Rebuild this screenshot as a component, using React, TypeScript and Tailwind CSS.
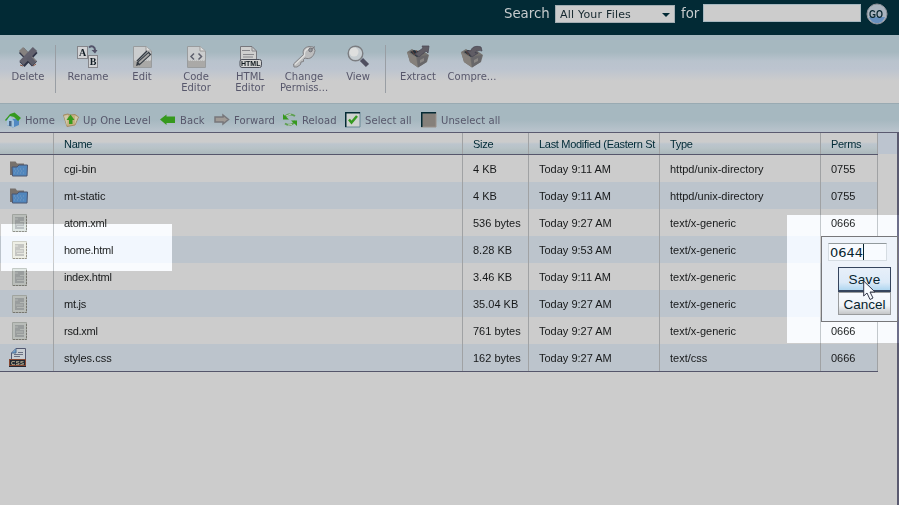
import React from 'react';

const Delete = () => (
  <svg width="24" height="24" viewBox="0 0 24 24">
    <path d="M5.500 5.500L18.500 19M19 5.500L6 19.500" stroke="#2f3346" strokeWidth="7" strokeLinecap="butt" />
    <path d="M5 4L18.500 18" stroke="#85817f" strokeWidth="6" strokeLinecap="butt" />
    <path d="M19 4L5.500 18" stroke="#62616e" strokeWidth="6" strokeLinecap="butt" />
    <path d="M12 12L18 18.500" stroke="#5d5d6a" strokeWidth="5" />
    <path d="M4 20L7 21M17 21L20 19" stroke="#8a5340" strokeWidth="1" />
  </svg>
);
const Rename = () => (
  <svg width="24" height="24" viewBox="0 0 24 24">
    <rect x="1.500" y="1.500" width="10" height="12" fill="#d2d3d5" stroke="#85868b" />
    <rect x="12.500" y="10.500" width="9" height="12" fill="#d2d3d5" stroke="#85868b" />
    <text x="6.500" y="11" textAnchor="middle" fontSize="10" fontWeight="bold" fontFamily="Liberation Serif, serif" fill="#111c24">A</text>
    <text x="17" y="20" textAnchor="middle" fontSize="10" fontWeight="bold" fontFamily="Liberation Serif, serif" fill="#111c24">B</text>
    <path d="M13 2.500C16 0 19 2 19 5" stroke="#535369" strokeWidth="2" fill="none" />
    <path d="M15.500 5H21.500L19 8.500Z" fill="#535369" />
  </svg>
);
const Paper = ({ children }: { children: React.ReactNode }) => (
  <svg width="24" height="24" viewBox="0 0 24 24">
    <path d="M3.500 1.500H16L21.500 6V22.500H3.500Z" fill="#cbcdce" stroke="#999c9e" />
    <path d="M4 16H21V22H4Z" fill="#aaa9a7" />
    <path d="M4 15.500H21" stroke="#bbbbb9" strokeDasharray="1 1" />
    <path d="M16 1.500V6H21" fill="#dedede" stroke="#9a9998" />
    {children}
  </svg>
);
const Edit = () => (
  <Paper>
    <path d="M8 19L20 8" stroke="#343b43" strokeWidth="4" />
    <path d="M9 18L19 9" stroke="#aaa9a8" strokeWidth="1.800" />
    <path d="M6 21L9 20L7 17Z" fill="#30363d" />
    <path d="M7 16L17 6" stroke="#343b43" strokeWidth="1.500" />
  </Paper>
);
const Code = () => (
  <Paper>
    <path d="M10 8.500L7 11.500L10 14.500M14.500 8.500L17.500 11.500L14.500 14.500" fill="none" stroke="#5f606d" strokeWidth="1.500" />
  </Paper>
);
const Html = () => (
  <svg width="24" height="24" viewBox="0 0 24 24">
    <path d="M2.500 1.500H14L18.500 6V18H2.500Z" fill="#d0d0cf" stroke="#77777c" />
    <path d="M14 2V6H18M4 5.500H12M5 9.500H16M5 12H15" fill="none" stroke="#88888c" />
    <rect x="2" y="14.500" width="21.500" height="8" rx="2" fill="#d2d2d1" stroke="#4b4e58" />
    <text x="12.750" y="21" textAnchor="middle" fontSize="7" fontWeight="bold" fontFamily="Liberation Sans, sans-serif" fill="#10191e">HTML</text>
  </svg>
);
const Key = () => (
  <svg width="24" height="24" viewBox="0 0 24 24">
    <path d="M1.500 19L11.500 9.500C10 5 13 2 17 1.500L21.500 2L23 5.500C22 11 19 14 15 13.500L13 13L11.500 14.500V16.500L9 17L8.500 19.500L5 22H2Z" fill="#bcbdbe" stroke="#818185" />
    <path d="M3 19.500L12.500 10.500C12 6 14 4 17 3.500" fill="none" stroke="#dfdfde" strokeWidth="1.300" />
    <circle cx="18.500" cy="5" r="1.800" fill="#92979b" stroke="#717177" />
    <path d="M20 4L23 1.500" stroke="#77777d" />
  </svg>
);
const View = () => (
  <svg width="24" height="24" viewBox="0 0 24 24">
    <path d="M15.500 14.500L21.500 20.500" stroke="#4f4f60" strokeWidth="4.500" />
    <circle cx="9.500" cy="8.500" r="7.300" fill="#c6cdd1" stroke="#7b7d81" strokeWidth="1.400" />
    <circle cx="8" cy="7" r="4.500" fill="#dedfde" />
  </svg>
);
const Box = ({ arrow }: { arrow: string }) => (
  <svg width="24" height="24" viewBox="0 0 24 24">
    <path d="M1 7L6 4L9 6L16 5L23 10L21 17L12 22.500L4 17Z" fill="#74726f" />
    <path d="M1 7L10 12L12 22.500L4 17Z" fill="#85807b" />
    <path d="M11 12L22 10L20.500 17L12 22.500Z" fill="#68676a" />
    <path d="M4 7L8 5L18 8L11 12Z" fill="#26303a" />
    <path d="M6 6L9 10M10 5L12 10M13 6L14 9" stroke="#85503f" strokeWidth=".7" />
    <path d={arrow} fill="#605d65" stroke="#4b4a57" strokeWidth=".8" />
    <path d="M14 15L18 13V16L14 18Z" fill="#8a8785" />
  </svg>
);

const tools = [
  ['Rename', <Rename />], ['Edit', <Edit />], ['Code Editor', <Code />], ['HTML Editor', <Html />],
  ['Change Permiss...', <Key />], ['View', <View />],
] as const;

function Tool({ label, icon }: { label: string; icon: React.ReactNode }) {
  return (
    <div className="flex w-[54px] shrink-0 flex-col items-center pt-[10px] text-center text-[10px] leading-[11px] text-[#57576b]">
      {icon}
      <span className="pt-[2px]">{label.split(' ').map((w) => <span key={w} className="block">{w}</span>)}</span>
    </div>
  );
}

const Home = () => (
  <svg width="16" height="16" viewBox="0 0 16 16">
    <path d="M2 7V13L8 15.500L14 13V7Z" fill="#5189c3" /><path d="M2 8L5 4L9 9V15.500L2 13Z" fill="#a3c3dc" />
    <rect x="4" y="9" width="2.500" height="5" fill="#496786" />
    <path d="M0 8L5 2L9.500 .5L16 6L13 9L9 5L5 4L1 9Z" fill="#369a20" />
  </svg>
);
const Up = () => (
  <svg width="16" height="16" viewBox="0 0 16 16">
    <path d="M.5 3L5 2L7 3L12 2.500L15.500 5L12 13L4 14.500Z" fill="#c6b07f" stroke="#a28c68" />
    <path d="M1 4L5 3L4 14ZM12 4L15 5L12 12Z" fill="#d0c8aa" />
    <path d="M7.500 2.500L11.500 8H9.500V12H6V8H3.500Z" fill="#36991d" />
  </svg>
);
const Arrow = ({ back = false }) => (
  <svg width="16" height="16" viewBox="0 0 16 16">
    {back ? <path d="M0 7.500L6.500 2.500V4.500H15V11H6.500V13Z" fill="#36991d" /> : <path d="M1 5H9V3L14.500 7.500L9 12V10H1Z" fill="#a09b96" stroke="#77777b" strokeWidth="1.500" />}
  </svg>
);
const Reload = () => (
  <svg width="16" height="16" viewBox="0 0 16 16">
    <path d="M3 6C4 2 9 1.500 13 4M13 9C11 13 7 14 3 11.500" fill="none" stroke="#5d9f51" strokeWidth="2" />
    <path d="M1 2V7.500H7ZM9 8.500H15V14Z" fill="#36991d" />
    <path d="M4 4L9 2M10 12.500L6 13" stroke="#c2cdbf" />
  </svg>
);
const Checked = ({ on = false }) => (
  <svg width="16" height="16" viewBox="0 0 16 16">
    <rect width="15" height="15" fill={on ? '#cfd2d0' : '#85807a'} />
    <path d="M0 15H15V0" fill="none" stroke={on ? '#698896' : '#9a918a'} />
    <path d="M.75 15V.75H15" fill="none" stroke="#042a34" strokeWidth="1.500" />
    {on && <path d="M4 7.500L6.500 10.500L12 4" fill="none" stroke="#369a20" strokeWidth="2.500" />}
  </svg>
);

const nav = [
  ['Home', <Home />, 'w-[58px]'], ['Up One Level', <Up />, 'w-[97px]'], ['Back', <Arrow back />, 'w-[54px]'],
  ['Forward', <Arrow />, 'w-[68px]'], ['Reload', <Reload />, 'w-[63px]'],
  ['Select all', <Checked on />, 'w-[76px]'], ['Unselect all', <Checked />, 'w-[90px]'],
] as const;

const Folder = () => (
  <svg width="18" height="16" viewBox="0 0 18 16">
    <path d="M0 .5H5.500L7 2.500H14V8L2 14H0Z" fill="#77716c" />
    <path d="M2 6H7L9 4H17.500L17 15H2.500Z" fill="#5287bd" stroke="#4b5671" />
    <path d="M4 8H15M5 10H14M4 12H15" stroke="#769bc0" strokeDasharray="1 2" />
  </svg>
);
const FileIcon = () => (
  <svg className="ml-[2px]" width="16" height="18" viewBox="0 0 16 18">
    <path d="M.5.500H14.500V17.500H.5Z" fill="#b9bdb9" stroke="#a0a49f" />
    <path d="M1 17.500H14.500V1" fill="none" stroke="#77766f" strokeDasharray="2 1" />
    <path d="M3 3H12V15H3Z" fill="#999d9d" />
    <path d="M3 5H6M8 7.500H12M4 10H11M5 12.500H12" stroke="#b9bcb9" strokeWidth=".8" />
  </svg>
);
const Css = () => (
  <svg className="-ml-px" width="18" height="19" viewBox="0 0 18 19">
    <path d="M2.500 5L7 .5H16.500V12H2.500Z" fill="#c8ced3" stroke="#535870" />
    <path d="M2.500 5H7V.5" fill="#719fca" stroke="#4c6a8e" /><path d="M9 4.500H14M5 6.500H14M5 8.500H11" stroke="#6a7081" />
    <rect y="11" width="17" height="8" fill="#202630" /><path d="M0 11.500H17M0 17.500H17M.5 11V18M16.500 11V18" stroke="#874832" />
    <text x="8.500" y="17" textAnchor="middle" fontSize="6" fontWeight="bold" textLength="13" fontFamily="Liberation Sans, sans-serif" fill="#c7bd9d">CSS</text>
  </svg>
);

const rows = [
  ['cgi-bin', '4 KB', 'Today 9:11 AM', 'httpd/unix-directory', '0755'],
  ['mt-static', '4 KB', 'Today 9:11 AM', 'httpd/unix-directory', '0755'],
  ['atom.xml', '536 bytes', 'Today 9:27 AM', 'text/x-generic', '0666'],
  ['home.html', '8.28 KB', 'Today 9:53 AM', 'text/x-generic', ''],
  ['index.html', '3.46 KB', 'Today 9:11 AM', 'text/x-generic', ''],
  ['mt.js', '35.04 KB', 'Today 9:27 AM', 'text/x-generic', ''],
  ['rsd.xml', '761 bytes', 'Today 9:27 AM', 'text/x-generic', '0666'],
  ['styles.css', '162 bytes', 'Today 9:27 AM', 'text/css', '0666'],
];
const columns = 'grid grid-cols-[54px_409px_66px_131px_161px_57px]';
const cell = 'flex items-center overflow-hidden whitespace-nowrap border-r border-[#a0a2a4] pl-[10px]';

export default function App() {
  return (
    <div className="relative isolate flex h-[505px] w-[899px] flex-col overflow-hidden bg-[#cccccc] font-['DejaVu_Sans',sans-serif]">
      <header className="flex h-[35px] shrink-0 bg-[#022a35] pl-[504px] text-[13.300px] text-[#c6cbcd]">
        <span className="w-[51px] pt-[4px]">Search</span>
        <div className="mt-[5px] flex h-[18px] w-[120px] items-center justify-between border border-[#a3adb2] bg-[#cccccc] pl-1 pr-1 text-[11px] text-[#15272e]">
          <span className="pt-[2px] tracking-[0.200px]">All Your Files</span>
          <svg className="mt-[3px]" width="8" height="5" viewBox="0 0 8 5"><path d="M0 0H8L4 4Z" fill="#022a35" /></svg>
        </div>
        <span className="w-[28px] pl-[6px] pt-[4px]">for</span>
        <div className="mt-1 h-[18px] w-[158px] border border-[#a6b8c0] bg-[#cccccc]" />
        <svg className="ml-[5px] mt-[3px]" width="22" height="22" viewBox="0 0 22 22">
          <circle cx="11" cy="11" r="10" fill="#a9b4bf" stroke="#8c9199" />
          <path d="M3 14H19C17 19 14 20 11 20S5 19 3 14Z" fill="#668fbd" />
          <text x="10" y="15" textAnchor="middle" fontSize="11" fontWeight="bold" textLength="14" lengthAdjust="spacingAndGlyphs" fontFamily="Liberation Sans, sans-serif" fill="#07252f">GO</text>
        </svg>
      </header>

      <div className="flex h-[69px] shrink-0 border-b border-[#99aab2] bg-[linear-gradient(#a6b8c0_0px,#a6b8c0_17px,#b9c3cd_26px,#bcc4cf_34px,#cccccc_46px)] pl-px">
        <Tool label="Delete" icon={<Delete />} />
        <div className="mr-[5px] mt-[10px] h-12 w-px bg-[#999ea4]" />
        {tools.map(([label, icon]) => <Tool key={label} label={label} icon={icon} />)}
        <div className="mr-[5px] mt-[10px] h-12 w-px bg-[#999ea4]" />
        <Tool label="Extract" icon={<Box arrow="M9 9L17 3L16 1L23 1L22 8L20 6L13 12Z" />} />
        <Tool label="Compre..." icon={<Box arrow="M21 2C15 0 11 3 11 6H7L12 12L18 8H15C15 6 18 5 22 6Z" />} />
      </div>

      <nav className="flex h-[28px] shrink-0 items-center bg-[linear-gradient(#a6b8c0_0px,#a6b8c0_16px,#bac4cd_28px)] pl-[5px] pt-[4px] text-[10px] tracking-[0.100px] text-[#57576b]">
        {nav.map(([label, icon, width]) => (
          <div key={label} className={`flex shrink-0 items-center gap-1 whitespace-nowrap ${width}`}>{icon}<span className="pt-px">{label}</span></div>
        ))}
      </nav>

      <main className="flex min-h-0 flex-1 border-r-2 border-t border-[#5a5a70] font-['Liberation_Sans',Arial,sans-serif] text-[11px] text-[#17191a]">
        <div className="flex w-[878px] shrink-0 flex-col">
          <div className={`${columns} h-[22px] shrink-0 border-b border-[#55566b] bg-[linear-gradient(#cccccc_0px,#cccccc_9px,#bcc5cd_11px,#b8c3c7_15px,#abb8bc_21px)] tracking-[-0.300px] text-[#002a35]`}>
            {['', 'Name', 'Size', 'Last Modified (Eastern St', 'Type', 'Perms'].map((name, i) => <div key={i} className={`${cell} pt-[2px]`}>{name}</div>)}
          </div>
          {rows.map((row, i) => (
            <div key={row[0]} className={`${columns} h-[27px] shrink-0 ${i % 2 ? 'bg-[#bcc4cc]' : 'bg-[#cccccc]'}`}>
              <div className={cell}>{i < 2 ? <Folder /> : i === 7 ? <Css /> : <FileIcon />}</div>
              {row.map((value, n) => <div key={n} className={`${cell} pt-px ${n === 0 && i > 1 && i < 7 ? 'tracking-[-0.250px]' : ''}`}>{value}</div>)}
            </div>
          ))}
          <div className="h-px bg-[#55566b]" />
        </div>
        <div className="h-[21px] flex-1 bg-[#bcc4cf]" />
      </main>

      {/* Spotlights on the edited file and its permissions */}
      <div className="absolute left-px top-[224px] h-[47px] w-[171px] bg-[linear-gradient(#2e3032_12px,#393532_12px,#393532_39px,#2e3032_39px)] mix-blend-color-dodge" />
      <div className="absolute left-[787px] top-[215px] h-[128px] w-[112px] bg-[linear-gradient(#2e3032_21px,#393532_21px,#393532_48px,#2e3032_48px,#2e3032_75px,#393532_75px,#393532_102px,#2e3032_102px)] mix-blend-color-dodge" />

      <div className="absolute left-[821px] top-[236px] h-[86px] w-[77px] border border-[#77777a] bg-[#eef3fa] font-['Liberation_Sans',Arial,sans-serif] text-[13.500px] text-[#07242e]">
        <div className="ml-[6px] mt-[6px] flex h-[18px] w-[59px] items-center border border-[#d5dce2] border-t-[#929a9d] bg-[#f8fbff] pl-px font-['DejaVu_Sans',sans-serif] text-[13px]">
          <span className="pt-px">0644</span><span className="h-4 w-px bg-[#07242e]" />
        </div>
        <div className="ml-[16px] mt-[6px] flex h-[25px] w-[53px] items-center justify-center border border-b-2 border-[#35445d] bg-[linear-gradient(#e7eff9_0%,#dceaf8_65%,#b0d7f0_100%)] pt-[2px] tracking-[0.300px]">Save</div>
        <div className="ml-[16px] flex h-[23px] w-[53px] items-center justify-center border border-[#999b9d] bg-[linear-gradient(#f8faff_0%,#f0f4f8_60%,#c5c6c8_100%)] pt-[3px]">Cancel</div>
      </div>
      <svg className="absolute left-[863px] top-[280px]" width="13" height="21" viewBox="0 0 13 21">
        <path d="M.7 1V16L4 13L7 19.500L10 18L7 12H12Z" fill="#f8fbff" stroke="#34384b" />
      </svg>
    </div>
  );
}
